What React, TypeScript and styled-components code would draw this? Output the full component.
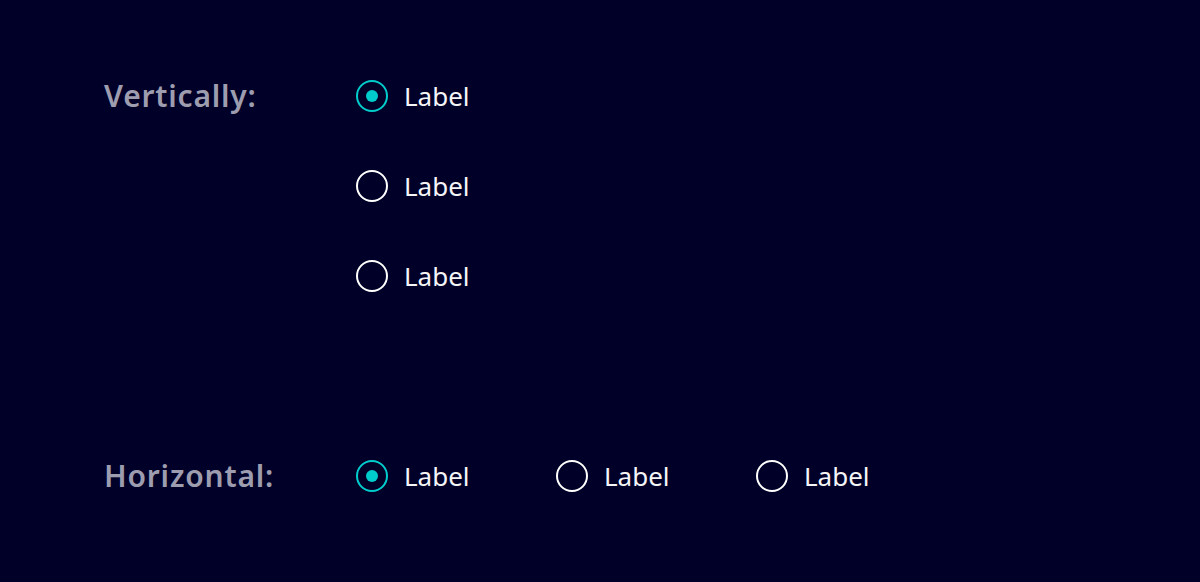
import * as React from 'react';
import styled, {createGlobalStyle} from 'styled-components';

const GlobalStyle = createGlobalStyle`
  html, body {
    margin: 0;
    padding: 0;
    background: #000028;
  }
  body {
    font-family: 'Noto Sans', 'Open Sans', sans-serif;
  }
`;

const ACCENT = '#00cccc';

const App = () => {
  const [vertical, setVertical] = React.useState(0);
  const [horizontal, setHorizontal] = React.useState(0);
  return (
    <Page>
      <GlobalStyle />
      <Section>
        <Heading>Vertically:</Heading>
        <VerticalGroup>
          {[0, 1, 2].map(i => (
            <RadioOption key={i} checked={vertical === i} onSelect={() => setVertical(i)} />
          ))}
        </VerticalGroup>
      </Section>
      <Section>
        <Heading>Horizontal:</Heading>
        <HorizontalGroup>
          {[0, 1, 2].map(i => (
            <RadioOption key={i} inline checked={horizontal === i} onSelect={() => setHorizontal(i)} />
          ))}
        </HorizontalGroup>
      </Section>
    </Page>
  );
};

const RadioOption = ({
  checked,
  inline,
  onSelect,
}: {
  checked: boolean;
  inline?: boolean;
  onSelect: () => void;
}) => {
  return (
    <Option $inline={inline} onClick={onSelect}>
      <Circle $checked={checked}>{checked && <Dot />}</Circle>
      <OptionLabel>Label</OptionLabel>
    </Option>
  );
};

const Page = styled.div`
  display: flex;
  flex-direction: column;
  gap: 168px;
  padding: 80px 0 0 104px;
  min-height: 582px;
  box-sizing: border-box;
  background: #000028;
`;

const Section = styled.div`
  display: grid;
  grid-template-columns: 252px auto;
  align-items: start;
`;

const Heading = styled.div`
  height: 32px;
  line-height: 32px;
  font-size: 30px;
  font-weight: 600;
  color: #9d9daf;
  letter-spacing: 0.8px;
`;

const VerticalGroup = styled.div`
  display: flex;
  flex-direction: column;
  gap: 58px;
`;

const HorizontalGroup = styled.div`
  display: flex;
  flex-direction: row;
`;

const Option = styled.label<{$inline?: boolean}>`
  display: flex;
  align-items: center;
  gap: 16px;
  height: 32px;
  width: ${props => (props.$inline ? '200px' : 'auto')};
  cursor: pointer;
`;

const Circle = styled.span<{$checked: boolean}>`
  display: flex;
  align-items: center;
  justify-content: center;
  width: 32px;
  height: 32px;
  box-sizing: border-box;
  border-radius: 50%;
  border: 2px solid ${props => (props.$checked ? ACCENT : '#ffffff')};
`;

const Dot = styled.span`
  width: 12px;
  height: 12px;
  border-radius: 50%;
  background: ${ACCENT};
`;

const OptionLabel = styled.span`
  font-size: 26px;
  line-height: 32px;
  color: #f5f5f7;
`;

export default App;
